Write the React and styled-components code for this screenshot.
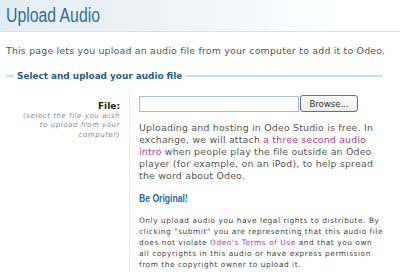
import React from 'react'
import styled, { createGlobalStyle } from 'styled-components'

const Global = createGlobalStyle`
    body {
        margin: 0;
        background: #fff;
        font-family: "DejaVu Sans", Verdana, sans-serif;
        color: #555;
    }
`

const App = () => {
    return (
        <Page>
            <Global />
            <Header>
                <Title>Upload Audio</Title>
            </Header>

            <Intro>This page lets you upload an audio file from your computer to add it to Odeo.</Intro>

            <Fieldset>
                <Legend>Select and upload your audio file</Legend>
                <Row>
                    <LabelCol>
                        <Label htmlFor="file">File:</Label>
                        <Hint>(select the file you wish<br />to upload from your<br />computer)</Hint>
                    </LabelCol>
                    <FieldCol>
                        <FileRow>
                            <FileInput id="file" type="text" readOnly />
                            <Browse type="button">Browse...</Browse>
                        </FileRow>
                        <Para>
                            Uploading and hosting in Odeo Studio is free. In<br />
                            exchange, we will attach <Link href="#">a three second audio<br />
                            intro</Link> when people play the file outside an Odeo<br />
                            player (for example, on an iPod), to help spread<br />
                            the word about Odeo.
                        </Para>
                        <Heading>Be Original!</Heading>
                        <Small>
                            Only upload audio you have legal rights to distribute. By<br />
                            clicking "submit" you are representing that this audio file<br />
                            does not violate <Link href="#">Odeo's Terms of Use</Link> and that you own<br />
                            all copyrights in this audio or have express permission<br />
                            from the copyright owner to upload it.
                        </Small>
                    </FieldCol>
                </Row>
            </Fieldset>
        </Page>
    )
}

const Page = styled.div`
    width: 400px;
    height: 272px;
    overflow: hidden;
`

const Header = styled.div`
    height: 31px;
    padding-left: 6px;
    display: flex;
    align-items: center;
    background: linear-gradient(to right, #e2edf3 0%, #eef4f8 45%, #fff 85%);
    border-bottom: 1px solid #d5e4ec;
`

const Title = styled.h1`
    margin: 0;
    font-family: "Liberation Sans", Arial, sans-serif;
    font-weight: normal;
    font-size: 19.5px;
    color: #2f6d9c;
    transform: scaleX(0.81);
    transform-origin: left center;
`

const Intro = styled.p`
    margin: 13px 0 0 6px;
    font-size: 9.4px;
    letter-spacing: 0.2px;
    line-height: 12px;
    color: #555;
    white-space: nowrap;
`

const Fieldset = styled.div`
    margin: 14px 17px 0 6px;
`

const Legend = styled.div`
    display: flex;
    align-items: center;
    gap: 3px;
    font-weight: bold;
    font-size: 8.9px;
    color: #1f5d8b;

    &::before {
        content: "";
        width: 8px;
        height: 2px;
        background: #c9dde7;
    }

    &::after {
        content: "";
        flex: 1;
        height: 2px;
        background: #c9dde7;
    }
`

const Row = styled.div`
    display: grid;
    grid-template-columns: 123px 1fr;
    margin-top: 10px;
`

const LabelCol = styled.div`
    text-align: right;
    padding: 9px 9px 0 0;
`

const Label = styled.label`
    display: block;
    font-weight: bold;
    font-size: 9px;
    color: #222;
    line-height: 12px;
`

const Hint = styled.div`
    margin-top: 0;
    font-style: italic;
    font-size: 7px;
    letter-spacing: 0.55px;
    line-height: 9.3px;
    color: #8a8a8a;
    white-space: nowrap;
`

const FieldCol = styled.div`
    border-left: 1px solid #e6eef2;
    padding: 4px 0 30px 9px;
`

const FileRow = styled.div`
    display: flex;
    align-items: center;
    gap: 1px;
`

const FileInput = styled.input`
    box-sizing: border-box;
    width: 160px;
    height: 16px;
    margin: 0;
    padding: 0;
    border: 1px solid #a9bccb;
    background: #fff;
`

const Browse = styled.button`
    box-sizing: border-box;
    width: 58px;
    height: 17px;
    margin: 0;
    padding: 0;
    border: 1px solid #4f7393;
    border-radius: 3px;
    background: linear-gradient(#ffffff, #ebebe6);
    font-family: "DejaVu Sans", Verdana, sans-serif;
    font-size: 8.5px;
    color: #333;
`

const Para = styled.p`
    margin: 10px 0 0;
    font-size: 9.4px;
    letter-spacing: 0.2px;
    line-height: 12px;
    color: #555;
    white-space: nowrap;
`

const Link = styled.a`
    color: #bb3597;
    text-decoration: none;
`

const Heading = styled.h3`
    margin: 10px 0 0;
    font-family: "Liberation Sans", Arial, sans-serif;
    font-size: 10.5px;
    font-weight: bold;
    color: #2a6aa0;
    transform: scaleX(0.82);
    transform-origin: left center;
`

const Small = styled.p`
    margin: 11px 0 0;
    font-size: 7.4px;
    letter-spacing: 0.55px;
    line-height: 11px;
    color: #444;
    white-space: nowrap;
`

export default App
